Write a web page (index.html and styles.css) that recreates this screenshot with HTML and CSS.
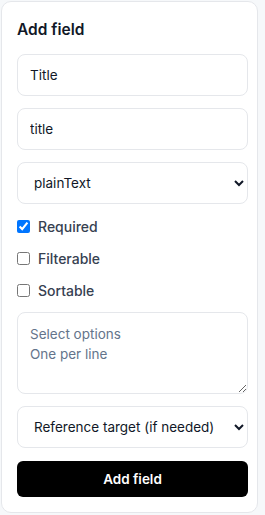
FILE: index.html
```html
<!DOCTYPE html>
<html lang="en">
<head>
    <meta charset="UTF-8">
    <meta name="viewport" content="width=device-width, initial-scale=1.0">
    <title>Add field</title>
    <link rel="stylesheet" href="styles.css">
</head>
<body>
    <form class="field-card">
        <h2>Add field</h2>

        <input type="text" class="field-input" value="Title" aria-label="Label">
        <input type="text" class="field-input" value="title" aria-label="Key">

        <select class="field-input" aria-label="Field type">
            <option value="plainText">plainText</option>
            <option value="richText">richText</option>
            <option value="number">number</option>
            <option value="select">select</option>
            <option value="reference">reference</option>
        </select>

        <label class="check-row first">
            <input type="checkbox" checked>
            <span>Required</span>
        </label>
        <label class="check-row">
            <input type="checkbox">
            <span>Filterable</span>
        </label>
        <label class="check-row">
            <input type="checkbox">
            <span>Sortable</span>
        </label>

        <textarea class="field-input options" placeholder="Select options&#10;One per line"></textarea>

        <select class="field-input" aria-label="Reference target">
            <option value="">Reference target (if needed)</option>
        </select>

        <button type="button" class="submit-btn">Add field</button>
    </form>
</body>
</html>
```

FILE: styles.css
```css
/* Reset */
* {
    box-sizing: border-box;
    margin: 0;
    padding: 0;
}

body {
    background-color: #f6f8fa;
    font-family: 'Inter', 'Liberation Sans', sans-serif;
    color: #111827;
    padding: 1px;
}

/* Card */
.field-card {
    width: 257px;
    height: 512px;
    background-color: #fff;
    border: 1px solid #e5e7eb;
    border-radius: 10px;
    padding: 15px 9px 15px 15px;
    display: flex;
    flex-direction: column;
    gap: 12px;
}

.field-card h2 {
    font-size: 15.5px;
    font-weight: 600;
    line-height: 25px;
    color: #111827;
}

/* Inputs */
.field-input {
    width: 100%;
    height: 42px;
    padding: 0 12px;
    font-family: inherit;
    font-size: 13.5px;
    color: #111827;
    background-color: #fff;
    border: 1px solid #e5e7eb;
    border-radius: 8px;
    outline: none;
}

select.field-input {
    padding-right: 4px;
}

.field-input.options {
    height: 82px;
    padding: 11px 12px 9px;
    line-height: 20px;
    resize: vertical;
}

.field-input.options::placeholder {
    color: #64748b;
}

/* Checkboxes */
.check-row {
    display: flex;
    align-items: center;
    gap: 8px;
    height: 20px;
    font-size: 14px;
    font-weight: 500;
    color: #374151;
}

.check-row.first {
    margin-top: 1px;
}

.check-row input {
    width: 13px;
    height: 13px;
    margin: 0;
}

/* Button */
.submit-btn {
    height: 36px;
    margin-top: 1px;
    background-color: #000;
    color: #fff;
    border: none;
    border-radius: 6px;
    font-family: inherit;
    font-size: 13.5px;
    font-weight: 600;
    cursor: pointer;
}
```
